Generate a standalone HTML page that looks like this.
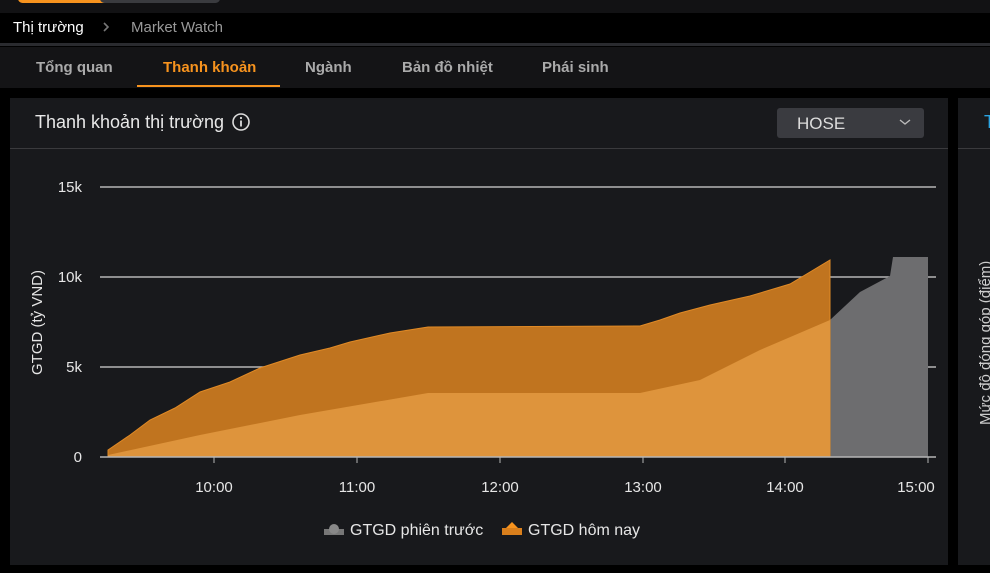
<!DOCTYPE html><html><head><meta charset="utf-8"><style>
body{margin:0;width:990px;height:573px;background:#000;overflow:hidden;font-family:"Liberation Sans",Arial,sans-serif;position:relative}
.a{position:absolute}
</style></head><body>
<div class="a" style="left:0;top:0;width:990px;height:13px;background:#121214"></div>
<div class="a" style="left:18px;top:-6px;width:95px;height:9px;background:#f7931e;border-radius:5px"></div>
<div class="a" style="left:100px;top:-6px;width:120px;height:9px;background:#3a3b3f;border-radius:5px"></div>
<div class="a" style="left:13px;top:19px;color:#fff;font-size:15px">Thị trường</div>
<svg class="a" style="left:101px;top:20px" width="10" height="14"><path d="M3 3l4 4-4 4" fill="none" stroke="#777" stroke-width="1.6"/></svg>
<div class="a" style="left:131px;top:19px;color:#999;font-size:15px">Market Watch</div>
<div class="a" style="left:0;top:43px;width:990px;height:3px;background:#2a2b2f"></div>
<div class="a" style="left:0;top:47px;width:990px;height:41px;background:#141416"></div>
<div class="a" style="left:36px;top:59px;color:#aaa;font-size:15px;font-weight:bold">Tổng quan</div>
<div class="a" style="left:163px;top:59px;color:#f7931e;font-size:15px;font-weight:bold">Thanh khoản</div>
<div class="a" style="left:137px;top:85px;width:143px;height:2px;background:#f7931e"></div>
<div class="a" style="left:305px;top:59px;color:#aaa;font-size:15px;font-weight:bold">Ngành</div>
<div class="a" style="left:402px;top:59px;color:#aaa;font-size:15px;font-weight:bold">Bản đồ nhiệt</div>
<div class="a" style="left:542px;top:59px;color:#aaa;font-size:15px;font-weight:bold">Phái sinh</div>
<div class="a" style="left:10px;top:98px;width:938px;height:467px;background:#18191c"></div>
<div class="a" style="left:10px;top:148px;width:938px;height:1px;background:#3a3a3d"></div>
<div class="a" style="left:35px;top:112px;color:#e8e8e8;font-size:18px">Thanh khoản thị trường</div>
<svg class="a" style="left:231px;top:112px" width="20" height="20"><circle cx="10" cy="10" r="8" fill="none" stroke="#ddd" stroke-width="1.6"/><rect x="9.1" y="8.5" width="1.8" height="6" fill="#ddd"/><circle cx="10" cy="6" r="1.1" fill="#ddd"/></svg>
<div class="a" style="left:777px;top:108px;width:147px;height:30px;background:#3a3b40;border-radius:3px"></div>
<div class="a" style="left:797px;top:114px;color:#ddd;font-size:17px">HOSE</div>
<svg class="a" style="left:898px;top:116px" width="14" height="12"><path d="M2 4l5 4 5-4" fill="none" stroke="#bbb" stroke-width="1.4"/></svg>
<div class="a" style="left:958px;top:98px;width:32px;height:467px;background:#18191c"></div>
<div class="a" style="left:958px;top:148px;width:32px;height:1px;background:#3a3a3d"></div>
<div class="a" style="left:984px;top:112px;color:#2aa3e0;font-size:18px">T</div>
<div class="a" style="left:977px;top:425px;transform:rotate(-90deg);transform-origin:0 0;color:#ccc;font-size:15px;white-space:nowrap">Mức độ đóng góp (điểm)</div>
<svg class="a" style="left:0;top:0" width="990" height="573">
<g stroke="#b5b5b5" stroke-width="1.5"><line x1="100" y1="187" x2="936" y2="187"/><line x1="100" y1="277" x2="936" y2="277"/><line x1="100" y1="367" x2="936" y2="367"/></g>
<polygon points="108,455 200,435 300,415 428,393 640,393 700,380 760,350 830,320 860,292 890,276 893,257 928,257 928,457 108,457" fill="#6d6d6f"/>
<polygon points="108,450 130,435 150,420 175,408 200,392 230,382 260,368 300,355 330,348 350,342 390,333 428,327 640,326 660,320 680,313 710,305 750,296 790,284 810,272 830,260 830,457 108,457" fill="#c0741f" stroke="#e08a26" stroke-width="1"/>
<polygon points="108,455 200,435 300,415 428,393 640,393 700,380 760,350 830,320 830,457 108,457" fill="#de943c"/>
<line x1="100" y1="457" x2="936" y2="457" stroke="#b5b5b5" stroke-width="1.5"/>
<g fill="#e6e6e6" font-size="15" font-family="Liberation Sans,Arial" text-anchor="end"><text x="82" y="192">15k</text><text x="82" y="282">10k</text><text x="82" y="372">5k</text><text x="82" y="462">0</text></g>
<g fill="#e6e6e6" font-size="15" font-family="Liberation Sans,Arial" text-anchor="middle"><text x="214" y="492">10:00</text><text x="357" y="492">11:00</text><text x="500" y="492">12:00</text><text x="643" y="492">13:00</text><text x="785" y="492">14:00</text><text x="916" y="492">15:00</text></g>
<g stroke="#b5b5b5"><line x1="214" y1="457" x2="214" y2="463"/><line x1="357" y1="457" x2="357" y2="463"/><line x1="500" y1="457" x2="500" y2="463"/><line x1="643" y1="457" x2="643" y2="463"/><line x1="785" y1="457" x2="785" y2="463"/><line x1="928" y1="457" x2="928" y2="463"/></g>
<text transform="translate(42,375) rotate(-90)" fill="#e6e6e6" font-size="15" font-family="Liberation Sans,Arial">GTGD (tỷ VND)</text>
<rect x="324" y="529" width="20" height="6" fill="#777"/><circle cx="334" cy="529" r="5" fill="#888"/>
<text x="350" y="535" fill="#e6e6e6" font-size="16" font-family="Liberation Sans,Arial">GTGD phiên trước</text>
<rect x="502" y="528" width="20" height="7" fill="#d97f1c"/><path d="M506 528l6-6 6 6z" fill="#f7931e"/>
<text x="528" y="535" fill="#e6e6e6" font-size="16" font-family="Liberation Sans,Arial">GTGD hôm nay</text>
</svg>
</body></html>
